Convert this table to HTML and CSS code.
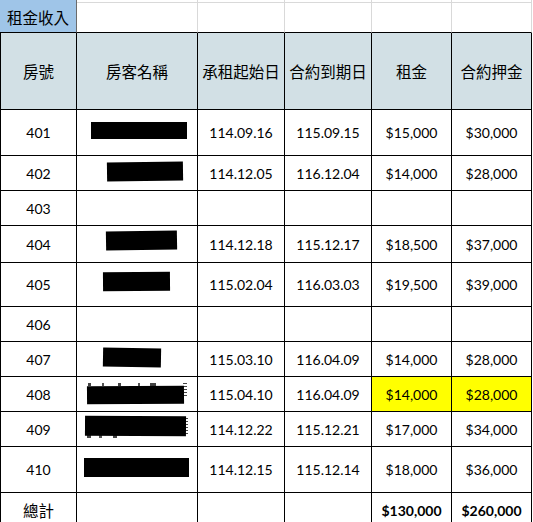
FILE: index.html
```html
<!DOCTYPE html>
<html lang="zh-Hant">
<head>
<meta charset="utf-8">
<title>租金收入</title>
<link rel="stylesheet" href="styles.css">
</head>
<body>
<div class="sheet">
  <div class="c title">租金收入</div>
  <div class="c top"></div>
  <div class="c top"></div>
  <div class="c top"></div>
  <div class="c top"></div>
  <div class="c top"></div>

  <div class="c hd first">房號</div>
  <div class="c hd">房客名稱</div>
  <div class="c hd">承租起始日</div>
  <div class="c hd">合約到期日</div>
  <div class="c hd">租金</div>
  <div class="c hd">合約押金</div>

  <div class="c first">401</div>
  <div class="c name"><span class="bar b401"></span></div>
  <div class="c">114.09.16</div>
  <div class="c">115.09.15</div>
  <div class="c">$15,000</div>
  <div class="c">$30,000</div>

  <div class="c first">402</div>
  <div class="c name"><span class="bar b402"></span></div>
  <div class="c">114.12.05</div>
  <div class="c">116.12.04</div>
  <div class="c">$14,000</div>
  <div class="c">$28,000</div>

  <div class="c first">403</div>
  <div class="c name"></div>
  <div class="c"></div>
  <div class="c"></div>
  <div class="c"></div>
  <div class="c"></div>

  <div class="c first">404</div>
  <div class="c name"><span class="bar b404"></span></div>
  <div class="c">114.12.18</div>
  <div class="c">115.12.17</div>
  <div class="c">$18,500</div>
  <div class="c">$37,000</div>

  <div class="c first">405</div>
  <div class="c name"><span class="bar b405"></span></div>
  <div class="c">115.02.04</div>
  <div class="c">116.03.03</div>
  <div class="c">$19,500</div>
  <div class="c">$39,000</div>

  <div class="c first">406</div>
  <div class="c name"></div>
  <div class="c"></div>
  <div class="c"></div>
  <div class="c"></div>
  <div class="c"></div>

  <div class="c first">407</div>
  <div class="c name"><span class="bar b407"></span></div>
  <div class="c">115.03.10</div>
  <div class="c">116.04.09</div>
  <div class="c">$14,000</div>
  <div class="c">$28,000</div>

  <div class="c first">408</div>
  <div class="c name"><span class="frag f408a"></span><span class="frag f408b"></span><span class="bar b408"></span></div>
  <div class="c">115.04.10</div>
  <div class="c">116.04.09</div>
  <div class="c hl">$14,000</div>
  <div class="c hl">$28,000</div>

  <div class="c first">409</div>
  <div class="c name"><span class="frag f409a"></span><span class="frag f409b"></span><span class="bar b409"></span></div>
  <div class="c">114.12.22</div>
  <div class="c">115.12.21</div>
  <div class="c">$17,000</div>
  <div class="c">$34,000</div>

  <div class="c first">410</div>
  <div class="c name"><span class="bar b410"></span></div>
  <div class="c">114.12.15</div>
  <div class="c">115.12.14</div>
  <div class="c">$18,000</div>
  <div class="c">$36,000</div>

  <div class="c first cjk">總計</div>
  <div class="c name"></div>
  <div class="c"></div>
  <div class="c"></div>
  <div class="c bold">$130,000</div>
  <div class="c bold">$260,000</div>
</div>
</body>
</html>
```

FILE: styles.css
```css
html, body {
  margin: 0;
  padding: 0;
  background: #ffffff;
  overflow: hidden;
}

.sheet {
  display: grid;
  grid-template-columns: 77px 121px 87px 87px 80px 80px;
  grid-template-rows: 33px 77px 46px 35px 35px 37px 44px 35px 35px 35px 35px 46px 35px;
  font-family: Lato, "Liberation Sans", "Noto Sans CJK TC", sans-serif;
  font-size: 14px;
  color: #000000;
}

.c {
  box-sizing: border-box;
  border-right: 1px solid #000000;
  border-bottom: 1px solid #000000;
  display: flex;
  align-items: center;
  justify-content: center;
  position: relative;
  white-space: nowrap;
}

.first {
  border-left: 1px solid #000000;
}

.title {
  background: #9fc5e8;
  border-right: 1px solid #6b6b6b;
  justify-content: flex-start;
  padding-left: 7px;
  padding-top: 1px;
  font-family: "Noto Sans CJK TC", sans-serif;
  font-size: 15.5px;
}

.top {
  border-right: 1px solid #d9d9d9;
  background: linear-gradient(#d9d9d9, #d9d9d9) 0 2px / 100% 1px no-repeat;
}

.hd {
  background: #d2e0e5;
  font-family: "Noto Sans CJK TC", sans-serif;
  font-size: 15.5px;
}

.cjk {
  font-family: "Noto Sans CJK TC", sans-serif;
  font-size: 15.5px;
}

.hl {
  background: #ffff00;
}

.bold {
  font-weight: 700;
}

/* redaction overlays covering tenant names */
.bar {
  position: absolute;
  background: #000000;
}

.frag {
  position: absolute;
}

.b401 { left: 14px; top: 12px; width: 96px; height: 17px; }
.b402 { left: 30px; top: 6px; width: 76px; height: 19px; transform: rotate(-0.8deg); }
.b404 { left: 29px; top: 5px; width: 71px; height: 19px; transform: rotate(-1deg); }
.b405 { left: 26px; top: 9px; width: 67px; height: 19px; transform: rotate(-0.5deg); }
.b407 { left: 26px; top: 6px; width: 58px; height: 19px; transform: rotate(1deg); }
.b408 { left: 10px; top: 9px; width: 97px; height: 18px; transform: rotate(-0.4deg); }
.f408a { left: 11px; top: 6px; width: 80px; height: 3px; background: linear-gradient(90deg, #444 0 3px, transparent 3px 14px, #555 14px 16px, transparent 16px 30px, #444 30px 33px, transparent 33px 50px, #555 50px 52px, transparent 52px 62px, #444 62px 68px, transparent 68px); }
.f408b { left: 106px; top: 6px; width: 4px; height: 15px; background: repeating-linear-gradient(#444 0 1px, transparent 1px 3px); }
.b409 { left: 8px; top: 4px; width: 101px; height: 20px; transform: rotate(0.3deg); }
.f409a { left: 10px; top: 23px; width: 44px; height: 3px; background: linear-gradient(90deg, #444 0 4px, transparent 4px 12px, #555 12px 15px, transparent 15px 26px, #444 26px 30px, transparent 30px); }
.f409b { left: 108px; top: 6px; width: 3px; height: 16px; background: repeating-linear-gradient(#444 0 1px, transparent 1px 3px); }
.b410 { left: 7px; top: 11px; width: 105px; height: 19px; }
```
